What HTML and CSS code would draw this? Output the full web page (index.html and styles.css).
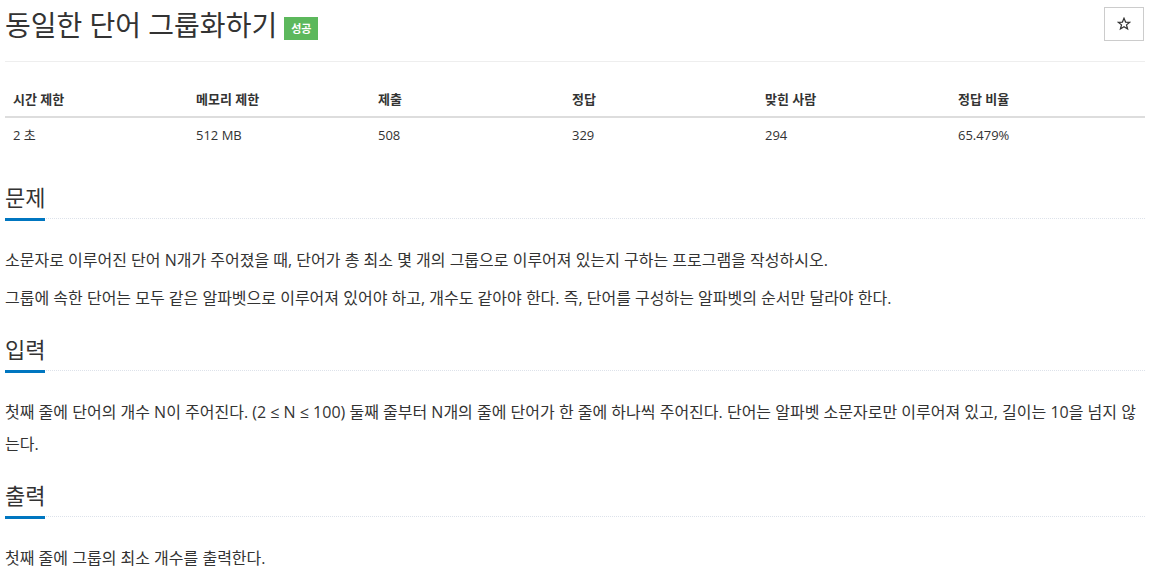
FILE: index.html
```html
<!DOCTYPE html>
<html lang="ko">
<head>
<meta charset="utf-8">
<link rel="stylesheet" href="styles.css">
</head>
<body>
<div class="page">
  <div class="title-row">
    <h1 class="title">동일한 단어 그룹화하기 <span class="badge">성공</span></h1>
    <button class="star-btn"><svg width="14" height="14" viewBox="0 0 14 14"><path d="M7 1.2 L8.6 5.1 L12.8 5.3 L9.5 7.9 L10.6 12 L7 9.7 L3.4 12 L4.5 7.9 L1.2 5.3 L5.4 5.1 Z" fill="none" stroke="#333" stroke-width="1.2" stroke-linejoin="miter"/></svg></button>
  </div>
  <div class="rule"></div>
  <table class="info">
    <thead>
      <tr><th class="c1">시간 제한</th><th class="c2">메모리 제한</th><th class="c3">제출</th><th class="c4">정답</th><th class="c5">맞힌 사람</th><th class="c6">정답 비율</th></tr>
    </thead>
    <tbody>
      <tr><td>2 초</td><td>512 MB</td><td>508</td><td>329</td><td>294</td><td>65.479%</td></tr>
    </tbody>
  </table>

  <section class="sec">
    <div class="headline"><h2><span>문제</span></h2></div>
    <div class="text">
      <p>소문자로 이루어진 단어 N개가 주어졌을 때, 단어가 총 최소 몇 개의 그룹으로 이루어져 있는지 구하는 프로그램을 작성하시오.</p>
      <p>그룹에 속한 단어는 모두 같은 알파벳으로 이루어져 있어야 하고, 개수도 같아야 한다. 즉, 단어를 구성하는 알파벳의 순서만 달라야 한다.</p>
    </div>
  </section>

  <section class="sec">
    <div class="headline"><h2><span>입력</span></h2></div>
    <div class="text">
      <p>첫째 줄에 단어의 개수 N이 주어진다. (2 ≤ N ≤ 100) 둘째 줄부터 N개의 줄에 단어가 한 줄에 하나씩 주어진다. 단어는 알파벳 소문자로만 이루어져 있고, 길이는 10을 넘지 않는다.</p>
    </div>
  </section>

  <section class="sec">
    <div class="headline"><h2><span>출력</span></h2></div>
    <div class="text">
      <p>첫째 줄에 그룹의 최소 개수를 출력한다.</p>
    </div>
  </section>
</div>
</body>
</html>
```

FILE: styles.css
```css
* { box-sizing: border-box; }
html, body { margin: 0; padding: 0; background: #fff; }
body {
  font-family: "Open Sans", "Noto Sans CJK KR", sans-serif;
  color: #333;
  font-size: 14px;
}
.page {
  width: 1140px;
  margin-left: 5px;
}
.title-row {
  display: flex;
  justify-content: space-between;
  align-items: flex-start;
  padding-top: 7px;
  height: 61px;
}
.title {
  margin: 0;
  font-size: 28px;
  font-weight: 400;
  line-height: 36px;
  color: #333;
  display: flex;
  align-items: center;
}
.badge {
  display: inline-block;
  background: #5cb85c;
  color: #fff;
  font-size: 11px;
  font-weight: 700;
  line-height: 23px;
  height: 23px;
  padding: 0 7px;
  margin-left: 7px;
  margin-top: 7px;
}
.star-btn {
  width: 40px;
  height: 34px;
  border: 1px solid #ccc;
  background: #fff;
  padding: 0;
  margin-right: 1px;
  display: flex;
  align-items: center;
  justify-content: center;
}
.star-btn svg { display: block; margin-top: -1px; }
.rule {
  border-top: 1px solid #eee;
}
.info {
  width: 1140px;
  border-collapse: collapse;
  margin-top: 19px;
  font-size: 13px;
  table-layout: fixed;
}
.info th, .info td {
  text-align: left;
  padding: 0 8px;
}
.info th {
  font-weight: 700;
  height: 36px;
  vertical-align: middle;
  border-bottom: 2px solid #ddd;
}
.info td { height: 34px; vertical-align: middle; }
.c1 { width: 183px; }
.c2 { width: 182px; }
.c3 { width: 194px; }
.c4 { width: 193px; }
.c5 { width: 193px; }
.c6 { width: 195px; }

.sec { margin-top: 20px; }
.sec:first-of-type { margin-top: 31px; }
.headline {
  border-bottom: 1px dotted #dde2ea;
  height: 37px;
}
.headline h2 {
  margin: 0;
  font-size: 22px;
  font-weight: 400;
  line-height: 30px;
  color: #333;
}
.headline h2 span {
  display: inline-block;
  border-bottom: 3px solid #0076c0;
  padding-bottom: 6px;
}
.text {
  padding-top: 25px;
}
.text p {
  margin: 0;
  font-size: 16px;
  line-height: 32px;
}
.text p + p { margin-top: 6px; }
```
